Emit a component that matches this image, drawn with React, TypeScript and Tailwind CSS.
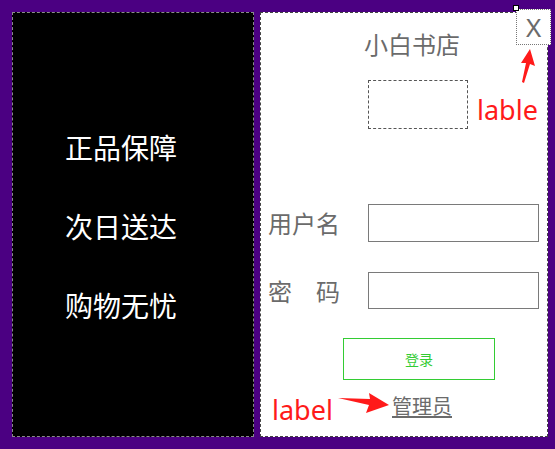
import React from "react";

const cjk = "font-['Microsoft_YaHei','Noto_Sans_CJK_SC',sans-serif]";

export default function App() {
    return (
        <div className="relative w-[555px] h-[449px] bg-[#4b0082] flex gap-[6px] pl-[12px] pt-[12px] overflow-hidden">
            {/* left black panel */}
            <div className={`w-[242px] h-[425px] bg-black border border-dashed border-[#8a8a8a] flex flex-col gap-[51px] pl-[52px] pt-[120px] text-white text-[28px] leading-[28px] ${cjk}`}>
                <div>正品保障</div>
                <div>次日送达</div>
                <div>购物无忧</div>
            </div>

            {/* right login panel */}
            <div className={`relative w-[288px] h-[425px] bg-white border border-dashed border-[#444] flex flex-col text-[#6b6b6b] ${cjk}`}>
                <div className="pl-[103px] mt-[19px] text-[24px] leading-[24px]">小白书店</div>

                <div className="ml-[107px] mt-[24px] w-[100px] h-[49px] border border-dashed border-[#555]" />

                <div className="flex items-center pl-[7px] mt-[75px]">
                    <span className="w-[100px] text-[24px] leading-[24px]">用户名</span>
                    <input className="w-[171px] h-[38px] border border-[#7a7a7a] outline-none" />
                </div>

                <div className="flex items-center pl-[7px] mt-[30px]">
                    <span className="w-[100px] text-[24px] leading-[24px]">密　码</span>
                    <input type="password" className="w-[171px] h-[37px] border border-[#7a7a7a] outline-none" />
                </div>

                <button className="ml-[82px] mt-[29px] w-[152px] h-[42px] border border-[#33cc33] text-[#33cc33] text-[14px] leading-[14px]">
                    登录
                </button>

                <a className="ml-[131px] mt-[15px] w-fit text-[20px] leading-[22px] underline underline-offset-2">管理员</a>

                {/* close button */}
                <div className="absolute left-[255px] top-[-4px] w-[35px] h-[36px] border border-dotted border-[#777] bg-white flex items-center justify-center font-['Noto_Sans',sans-serif] text-[26px] leading-none text-[#6b6b6b]">
                    X
                </div>
                <div className="absolute left-[252px] top-[-8px] w-[6px] h-[6px] bg-white border border-black" />
            </div>

            {/* annotations */}
            <div className="absolute left-[477px] top-[92px] text-[27px] leading-[36px] text-[#ff1a1a] font-['Noto_Sans',sans-serif]">lable</div>
            <div className="absolute left-[272px] top-[392px] text-[27px] leading-[36px] text-[#ff1a1a] font-['Noto_Sans',sans-serif]">label</div>

            <svg className="absolute left-0 top-0" width="555" height="449" viewBox="0 0 555 449">
                <path d="M530 49 L535 66 L530 64 L524 83 L522 82 L526 63 L521 63 Z" fill="#ff1a1a" />
                <path d="M338 398 L370 399 L369 393 L389 405 L366 413 L369 405 Z" fill="#ff1a1a" />
            </svg>
        </div>
    );
}
